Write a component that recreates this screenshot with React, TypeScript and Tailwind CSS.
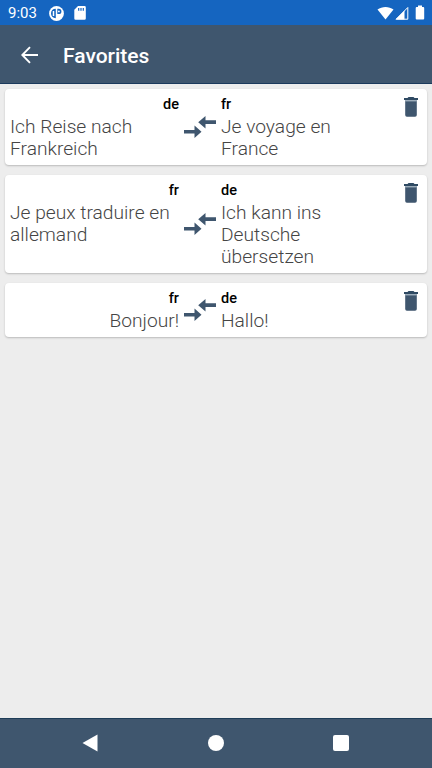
interface Phrase {
  lang: string;
  text: string;
}

interface Favorite {
  id: number;
  from: Phrase;
  to: Phrase;
}

const favorites: Favorite[] = [
  {
    id: 1,
    from: { lang: "de", text: "Ich Reise nach Frankreich" },
    to: { lang: "fr", text: "Je voyage en France" },
  },
  {
    id: 2,
    from: { lang: "fr", text: "Je peux traduire en allemand" },
    to: { lang: "de", text: "Ich kann ins Deutsche übersetzen" },
  },
  {
    id: 3,
    from: { lang: "fr", text: "Bonjour!" },
    to: { lang: "de", text: "Hallo!" },
  },
];

const StatusBar = () => (
  <div className="flex h-[25px] shrink-0 items-center bg-[#1565c0] pl-[8px] pr-[7px] text-white">
    <span className="w-[41px] pt-[2px] text-[15px] leading-none">9:03</span>
    <svg className="mt-px h-[15px] w-[15px]" viewBox="0 0 15 15">
      <circle cx="7.5" cy="7.5" r="7.4" fill="#fff" />
      <path
        d="M6.800 2.800v9.400C3.800 12.200 2 10.200 2 7.500s1.800-4.700 4.800-4.700z"
        fill="#1565c0"
      />
      <path d="M4.500 5v5" stroke="#fff" strokeWidth="1.500" />
      <path d="M8.300 2.800h1.500a2.600 2.600 0 0 1 0 5.200H8.300z" fill="#1565c0" />
      <circle cx="9.900" cy="5.400" r="0.900" fill="#fff" />
    </svg>
    <svg className="ml-[10px] mt-px h-[14px] w-[12px]" viewBox="0 0 12 14">
      <path
        d="M4 0h6.500A1.300 1.300 0 0 1 11.800 1.300v11.200a1.300 1.300 0 0 1-1.300 1.300h-9A1.300 1.300 0 0 1 .3 12.500V3.800z"
        fill="#fff"
      />
      <path d="M4.700 2v2.800M7 2v2.800M9.300 2v2.800" stroke="#1565c0" strokeWidth="1.200" />
    </svg>
    <div className="ml-auto flex items-center">
      <svg className="h-[14px] w-[17px]" viewBox="0 0 17 14">
        <path d="M8.500 13.500.5 3.600C5 .1 12 .1 16.500 3.600z" fill="#fff" />
      </svg>
      <svg className="ml-px h-[14px] w-[14px]" viewBox="0 0 14 14">
        <path d="M12.800 1.500v11.700H1.200z" fill="none" stroke="#fff" strokeWidth="1" />
        <path d="M9.500 4.500v9H.5z" fill="#fff" />
      </svg>
      <svg className="ml-[6px] h-[15px] w-[10px]" viewBox="0 0 10 15">
        <path
          d="M3 .5h4V2h1.200q1 0 1 1v10.500q0 1-1 1H1.700q-1 0-1-1V3q0-1 1-1H3z"
          fill="#fff"
        />
      </svg>
    </div>
  </div>
);

const AppBar = () => (
  <header className="flex h-[59px] shrink-0 items-center border-b border-[#1b3a5c] bg-[#3f566e] pl-[21px] text-white">
    <svg className="mt-px h-[18px] w-[17px]" viewBox="0 0 17 18" fill="none" stroke="#fff" strokeWidth="1.900">
      <path d="M17 9H1.500M9 1.200 1.300 9 9 16.800" />
    </svg>
    <h1 className="ml-[25px] mt-[4px] text-[21px] font-medium leading-none">Favorites</h1>
  </header>
);

const SwapIcon = () => (
  <svg className="h-[22px] w-[32px]" viewBox="0 0 32 22" fill="#3f566e">
    <path d="M32 4.300v3.700H21.500v4.500l-7.300-6.300L21.500 0v4.300z" />
    <path d="M0 13.900v3.700h10.500V22l7-6.200-7-6.300v4.400z" />
  </svg>
);

const TrashIcon = () => (
  <svg className="h-5 w-[14px]" viewBox="0 0 14 20">
    <path d="M1.200 3.300h11.600V18q0 1.700-1.700 1.700H2.900q-1.700 0-1.700-1.700z" fill="#3f566e" />
    <path d="M1.200 3.100h11.600v1.300H1.200z" fill="#a3b3c0" />
    <path d="M4.500 0h5l1 1H14v2.100H0V1h3.500z" fill="#2f4a63" />
  </svg>
);

const FavoriteCard = ({ favorite }: { favorite: Favorite }) => {
  const { from, to } = favorite;
  return (
    <li className="flex rounded-[4px] bg-white py-[5px] shadow-[0_1px_2px_rgba(0,0,0,0.22)]">
      <div className="flex w-[179px] flex-col items-end px-[5px]">
        <span className="text-[14.500px] font-medium leading-[22px] text-black">{from.lang}</span>
        <p className="text-[19.200px] leading-[22px]">{from.text}</p>
      </div>
      <div className="flex w-[32px] items-center">
        <SwapIcon />
      </div>
      <div className="w-[140px] pl-[5px]">
        <span className="block text-[14.500px] font-medium leading-[22px] text-black">{to.lang}</span>
        <p className="text-[19.200px] leading-[22px]">{to.text}</p>
      </div>
      <button className="ml-auto mr-[9px] mt-[3px] self-start" aria-label="Delete">
        <TrashIcon />
      </button>
    </li>
  );
};

const NavBar = () => (
  <nav className="flex h-[50px] shrink-0 items-center justify-between border-t border-[#1f3d58] bg-[#3f566e] pb-px pl-[82px] pr-[83px]">
    <svg className="h-[18px] w-[16px]" viewBox="0 0 16 18">
      <path d="M15.500.5v17L.5 9z" fill="#fff" />
    </svg>
    <span className="h-4 w-4 rounded-full bg-white" />
    <span className="h-4 w-4 rounded-[2px] bg-white" />
  </nav>
);

export default function App() {
  return (
    <div className="flex h-screen flex-col bg-[#ededed] font-['Roboto',sans-serif]">
      <StatusBar />
      <AppBar />
      <ul className="flex flex-1 flex-col gap-[10px] px-[5px] pt-[5px] font-light text-[#454545]">
        {favorites.map((favorite) => (
          <FavoriteCard key={favorite.id} favorite={favorite} />
        ))}
      </ul>
      <NavBar />
    </div>
  );
}
